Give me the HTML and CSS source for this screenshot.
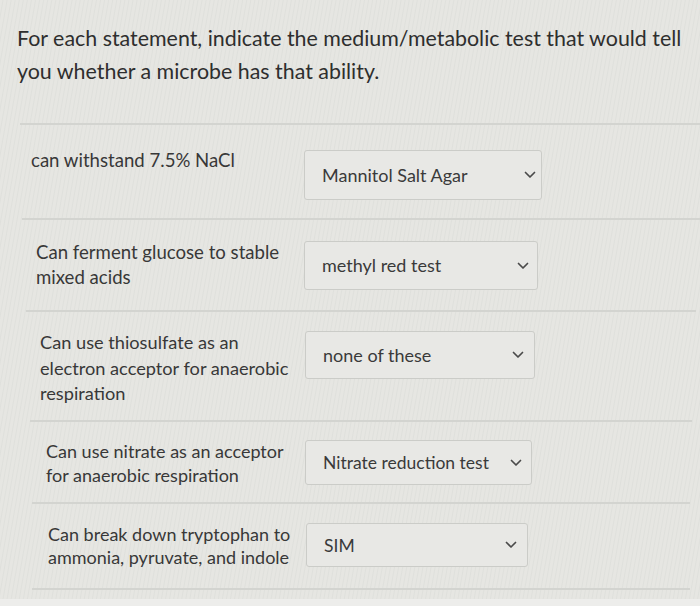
FILE: index.html
```html
<!DOCTYPE html>
<html lang="en">
<head>
<meta charset="utf-8">
<title>Matching question</title>
<link rel="stylesheet" href="styles.css">
</head>
<body>
<main class="page">
  <p class="prompt">For each statement, indicate the medium/metabolic test that would tell you whether a microbe has that ability.</p>
  <div class="rows">
    <div class="row r1">
      <div class="label">can withstand 7.5% NaCl</div>
      <div class="select"><span class="value">Mannitol Salt Agar</span><svg class="chev" viewBox="0 0 12 8"><path d="M1.5 1.5 L6 6 L10.5 1.5" /></svg></div>
    </div>
    <div class="row r2">
      <div class="label">Can ferment glucose to stable<br>mixed acids</div>
      <div class="select"><span class="value">methyl red test</span><svg class="chev" viewBox="0 0 12 8"><path d="M1.5 1.5 L6 6 L10.5 1.5" /></svg></div>
    </div>
    <div class="row r3">
      <div class="label">Can use thiosulfate as an<br>electron acceptor for anaerobic<br>respiration</div>
      <div class="select"><span class="value">none of these</span><svg class="chev" viewBox="0 0 12 8"><path d="M1.5 1.5 L6 6 L10.5 1.5" /></svg></div>
    </div>
    <div class="row r4">
      <div class="label">Can use nitrate as an acceptor<br>for anaerobic respiration</div>
      <div class="select"><span class="value">Nitrate reduction test</span><svg class="chev" viewBox="0 0 12 8"><path d="M1.5 1.5 L6 6 L10.5 1.5" /></svg></div>
    </div>
    <div class="row r5">
      <div class="label">Can break down tryptophan to<br>ammonia, pyruvate, and indole</div>
      <div class="select"><span class="value">SIM</span><svg class="chev" viewBox="0 0 12 8"><path d="M1.5 1.5 L6 6 L10.5 1.5" /></svg></div>
    </div>
  </div>
  <div class="bottom-edge"></div>
</main>
</body>
</html>
```

FILE: styles.css
```css
html, body {
  margin: 0;
  padding: 0;
}
body {
  background: #e4e4e0;
  font-family: Lato, "Open Sans", "Liberation Sans", sans-serif;
  color: #383838;
  width: 700px;
  height: 606px;
  overflow: hidden;
}
.page {
  position: relative;
  height: 606px;
  background: repeating-linear-gradient(100deg, #e6e6e2 0px, #e6e6e2 2px, #dfe0dc 3px, #e6e6e2 4px);
}
.prompt {
  margin: 0;
  padding: 22px 0 0 17px;
  font-size: 21.4px;
  line-height: 33px;
  color: #2e2e2e;
  width: 690px;
  height: 123px;
  box-sizing: border-box;
}
.rows {
  display: flex;
  flex-direction: column;
}
.row {
  display: flex;
  align-items: flex-start;
  border-top: 2px solid #d3d4d0;
  font-size: 18.6px;
  line-height: 25px;
  box-sizing: border-box;
}
.row:last-child {
  border-bottom: 2px solid #d3d4d0;
}
.label {
  box-sizing: border-box;
  flex: none;
  white-space: nowrap;
  overflow: visible;
}
.select {
  flex: none;
  box-sizing: border-box;
  display: flex;
  align-items: center;
  justify-content: space-between;
  border: 1px solid #cbccc8;
  border-radius: 3px;
  background: #e8e8e5;
  padding: 0 5px 0 17px;
  color: #3a3a3a;
  font-size: 18px;
}
.chev {
  width: 12px;
  height: 8px;
  fill: none;
  stroke: #4a4a4a;
  stroke-width: 1.7;
  stroke-linecap: round;
  stroke-linejoin: round;
}
.r1 { margin: 0 0 0 20px; height: 95px; padding-top: 23px; }
.r1 .label { width: 284px; padding-left: 11px; }
.r1 .select { width: 238px; height: 50px; margin-top: 2px; }

.r2 { margin: 0 0 0 22px; height: 92px; padding-top: 20px; }
.r2 .label { width: 282px; padding-left: 14px; }
.r2 .select { width: 234px; height: 49px; margin-top: 1px; padding-right: 8px; }

.r3 { margin: 0 4px 0 26px; height: 110px; padding-top: 18px; font-size: 18.2px; }
.r3 .label { width: 279px; padding-left: 14px; line-height: 25.5px; }
.r3 .select { width: 230px; height: 48px; margin-top: 1px; padding-right: 10px; }

.r4 { margin: 0 8px 0 30px; height: 82px; padding-top: 17px; line-height: 24px; font-size: 18px; }
.r4 .label { width: 275px; padding-left: 16px; }
.r4 .select { width: 227px; height: 45px; margin-top: 1px; padding-right: 9px; font-size: 17.5px; }

.r5 { margin: 0 10px 0 32px; height: 88px; padding-top: 19px; line-height: 23px; font-size: 18px; }
.r5 .label { width: 274px; padding-left: 16px; }
.r5 .select { width: 222px; height: 44px; margin-top: 0; padding-right: 10px; font-size: 17.5px; }

.bottom-edge {
  position: absolute;
  left: 0;
  right: 0;
  top: 599px;
  height: 7px;
  background: #ededeb;
}
```
